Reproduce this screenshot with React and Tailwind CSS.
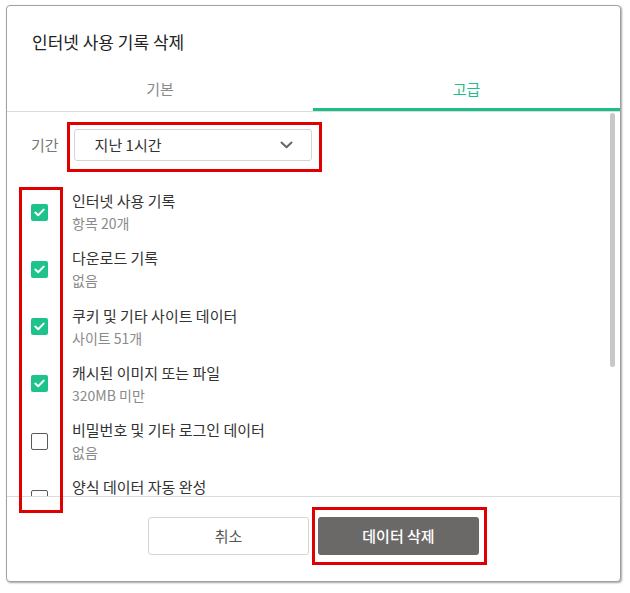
import React from 'react';

const items = [
  { title: '인터넷 사용 기록', sub: '항목 20개', checked: true },
  { title: '다운로드 기록', sub: '없음', checked: true },
  { title: '쿠키 및 기타 사이트 데이터', sub: '사이트 51개', checked: true },
  { title: '캐시된 이미지 또는 파일', sub: '320MB 미만', checked: true },
  { title: '비밀번호 및 기타 로그인 데이터', sub: '없음', checked: false },
  { title: '양식 데이터 자동 완성', sub: '없음', checked: false },
];

const Checkbox = ({ checked }) =>
  checked ? (
    <div className="w-[17px] h-[17px] shrink-0 rounded-[2px] bg-[#1ec38b] flex items-center justify-center">
      <svg width="11" height="9" viewBox="0 0 11 9" fill="none">
        <path d="M1.3 4.6 L4.2 7.3 L9.7 1.6" stroke="#fff" strokeWidth="2" strokeLinecap="round" strokeLinejoin="round" />
      </svg>
    </div>
  ) : (
    <div className="w-[17px] h-[17px] shrink-0 rounded-[2px] border-[1.5px] border-[#5a5a5a] bg-white" />
  );

export default function App() {
  return (
    <div
      className="relative w-[630px] h-[593px] bg-white pt-[5px] pl-[6px]"
      style={{ fontFamily: '"Noto Sans CJK KR", "Noto Sans", sans-serif' }}
    >
      {/* Dialog */}
      <div className="w-[615px] h-[577px] border border-[#a0a0a0] rounded-[4px] shadow-[1px_1px_2px_rgba(0,0,0,0.35)] bg-white flex flex-col overflow-hidden">
        <div className="pt-[24px] pl-[25px] text-[17px] leading-[24px] text-[#222]">인터넷 사용 기록 삭제</div>

        {/* Tabs */}
        <div className="flex border-b border-[#dcdcdc]">
          <div className="w-[306px] h-[57px] flex items-end justify-center pb-[11px] text-[15px] leading-[22px] text-[#8a8a8a]">
            기본
          </div>
          <div className="flex-1 h-[57px] flex flex-col">
            <div className="flex-1 flex items-end justify-center pb-[8px] text-[15px] leading-[22px] text-[#1ebd8a]">
              고급
            </div>
            <div className="h-[3px] bg-[#1ebd8a]" />
          </div>
        </div>

        {/* Scroll area */}
        <div className="flex h-[385px] overflow-hidden border-b border-[#dcdcdc]">
          <div className="flex-1 pl-[24px] pt-[17px]">
            <div className="flex items-center gap-[15px]">
              <span className="text-[15px] leading-[22px] text-[#777]">기간</span>
              <div className="w-[238px] h-[32px] border border-[#d4d4d4] rounded-[3px] flex items-center justify-between pl-[20px] pr-[18px]">
                <span className="text-[15px] leading-[22px] text-[#333]">지난 1시간</span>
                <svg width="13" height="8" viewBox="0 0 13 8" fill="none">
                  <path d="M1.5 1.5 L6.5 6.3 L11.5 1.5" stroke="#666" strokeWidth="2" strokeLinecap="round" strokeLinejoin="round" />
                </svg>
              </div>
            </div>

            <div className="mt-[29px] flex flex-col gap-[13.3px]">
              {items.map((it) => (
                <div key={it.title} className="flex items-center gap-[24px]">
                  <Checkbox checked={it.checked} />
                  <div className="flex flex-col">
                    <span className="text-[15px] leading-[22px] text-[#333]">{it.title}</span>
                    <span className="text-[14px] leading-[22px] text-[#8a8a8a]">{it.sub}</span>
                  </div>
                </div>
              ))}
            </div>
          </div>
          <div className="w-[10px] pt-[1px] pr-[4px]">
            <div className="w-[5px] h-[254px] rounded-full bg-[#c8c8c8]" />
          </div>
        </div>

        {/* Footer */}
        <div className="flex justify-center gap-[9px] pt-[20px]">
          <button className="w-[161px] h-[38px] border border-[#d4d4d4] rounded-[3px] bg-white text-[15px] text-[#555]">
            취소
          </button>
          <button className="w-[161px] h-[38px] rounded-[3px] bg-[#6b6967] text-[15px] font-medium text-white">
            데이터 삭제
          </button>
        </div>
      </div>

      {/* Red annotation boxes */}
      <div className="absolute left-[67px] top-[122px] w-[255px] h-[50px] border-[3px] border-[#e00000]" />
      <div className="absolute left-[19px] top-[187px] w-[44px] h-[326px] border-[3px] border-[#e00000]" />
      <div className="absolute left-[312px] top-[507px] w-[175px] h-[58px] border-[3px] border-[#e00000]" />
    </div>
  );
}
